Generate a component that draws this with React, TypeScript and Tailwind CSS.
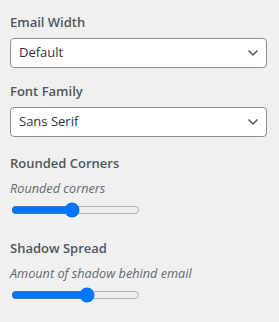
import { useState } from 'react';

const font = { fontFamily: '"Open Sans", "Noto Sans", sans-serif' };

function Chevron() {
  return (
    <svg width="12" height="8" viewBox="0 0 12 8" className="pointer-events-none absolute right-[8px] top-[11px]">
      <path d="M1.5 1.5 L6 6 L10.5 1.5" fill="none" stroke="#50575e" strokeWidth="1.5" />
    </svg>
  );
}

function SelectField({ label, value, options }: { label: string; value: string; options: string[] }) {
  const [val, setVal] = useState(value);
  return (
    <div className="flex flex-col">
      <label className="text-[13px] leading-[20px] font-semibold text-[#50575e]">{label}</label>
      <div className="relative mt-[6px]">
        <select
          value={val}
          onChange={(e) => setVal(e.target.value)}
          className="h-[30px] w-full appearance-none rounded-[4px] border border-[#8c8f94] bg-white pl-[8px] text-[13px] text-[#2c3338] outline-none"
        >
          {options.map((o) => (
            <option key={o}>{o}</option>
          ))}
        </select>
        <Chevron />
      </div>
    </div>
  );
}

function RangeField({ label, help, value }: { label: string; help: string; value: number }) {
  const [val, setVal] = useState(value);
  return (
    <div className="flex flex-col">
      <label className="text-[13px] leading-[20px] font-semibold text-[#50575e]">{label}</label>
      <p className="mt-[6px] text-[12.7px] leading-[18px] italic text-[#646970]">{help}</p>
      <input
        type="range"
        min={0}
        max={100}
        value={val}
        onChange={(e) => setVal(Number(e.target.value))}
        className="mt-[5px] ml-[1px] w-[129px]"
      />
    </div>
  );
}

export default function App() {
  return (
    <div className="min-h-[322px] w-[279px] bg-[#f0f0f0] pt-[12px] pr-[12px] pl-[10px]" style={font}>
      <SelectField label="Email Width" value="Default" options={['Default', 'Narrow', 'Wide']} />
      <div className="mt-[13px]">
        <SelectField label="Font Family" value="Sans Serif" options={['Sans Serif', 'Serif', 'Monospace']} />
      </div>
      <div className="mt-[16px]">
        <RangeField label="Rounded Corners" help="Rounded corners" value={47} />
      </div>
      <div className="mt-[20px]">
        <RangeField label="Shadow Spread" help="Amount of shadow behind email" value={60} />
      </div>
    </div>
  );
}
